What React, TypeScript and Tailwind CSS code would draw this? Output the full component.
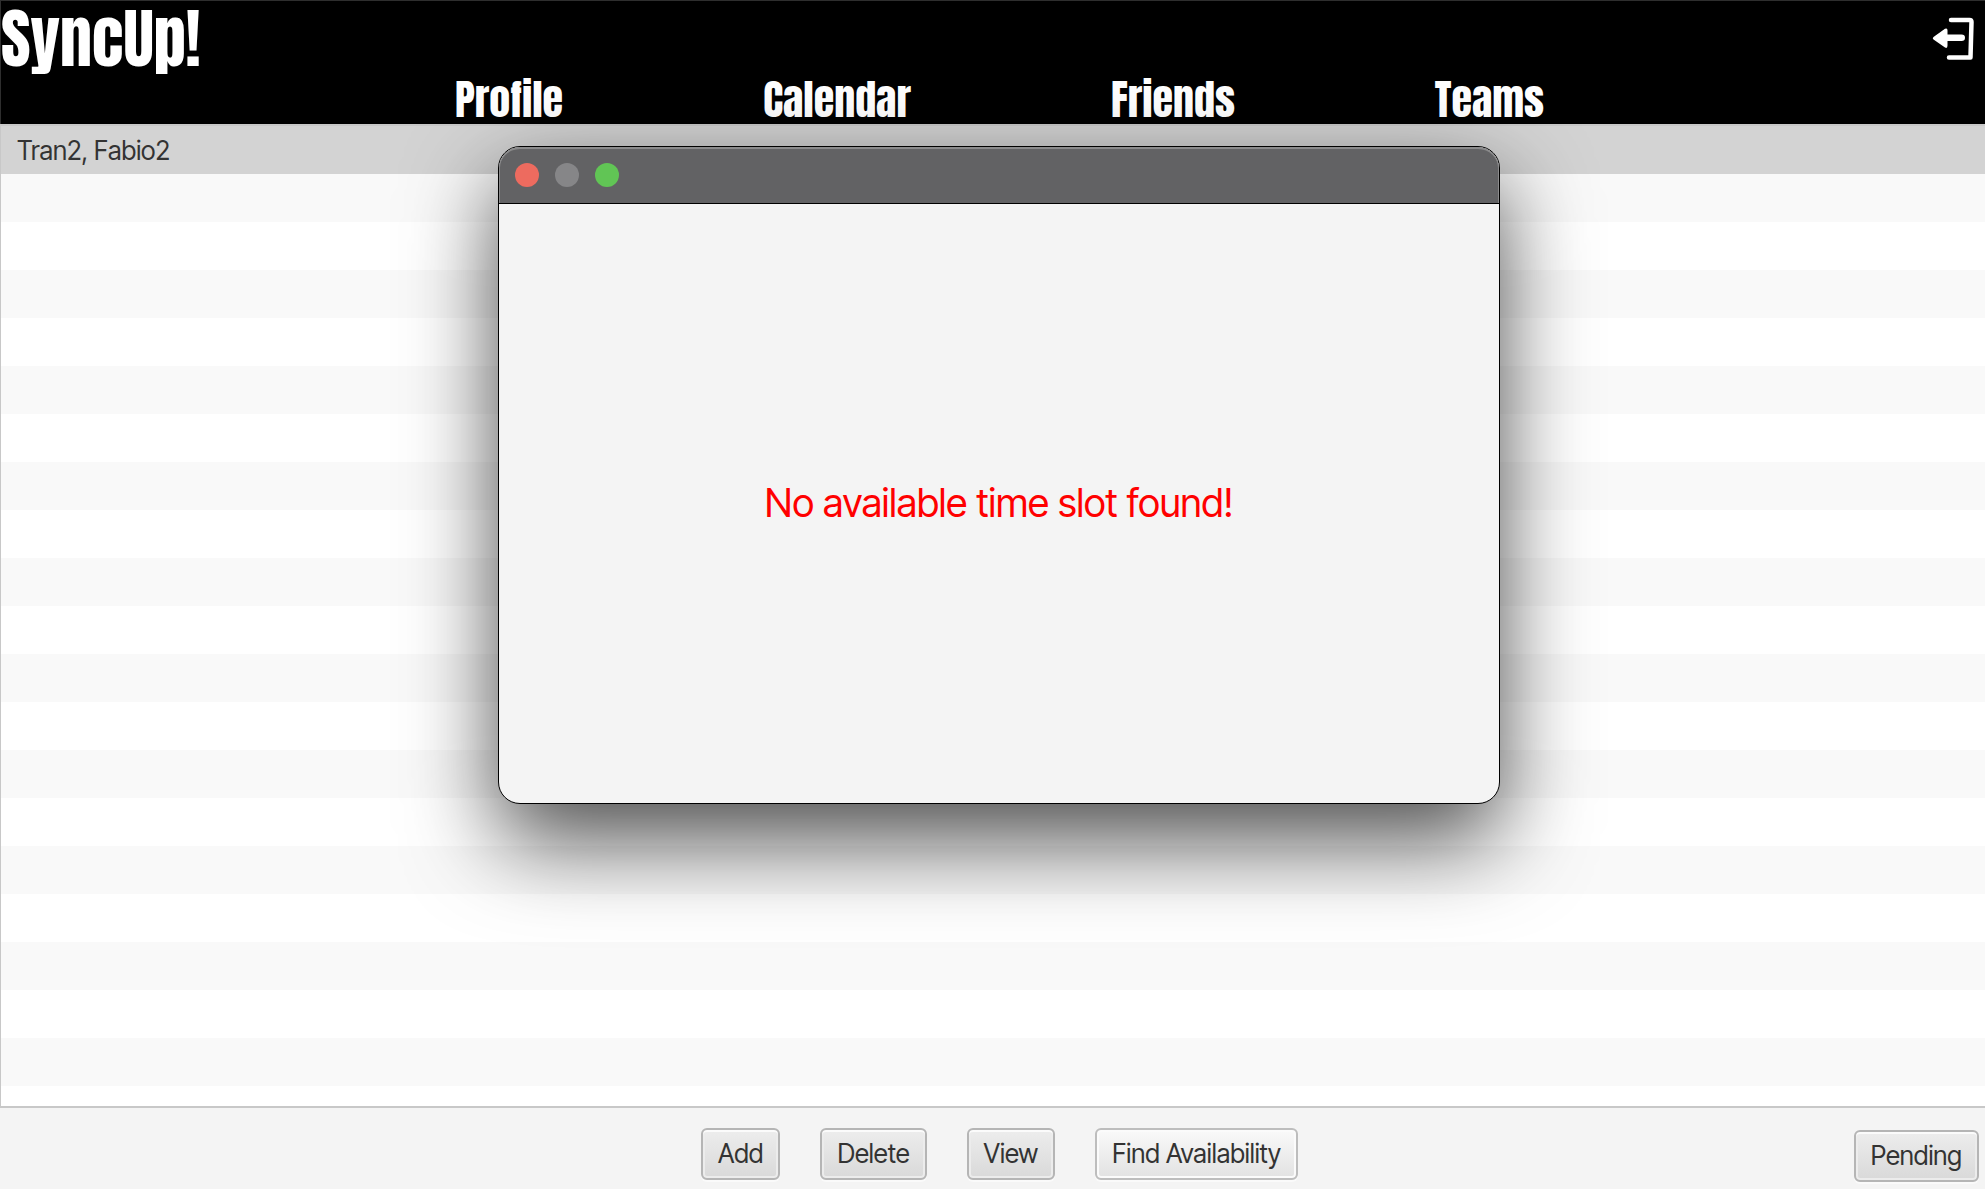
import type { ReactNode } from 'react';

const navItems = ['Profile', 'Calendar', 'Friends', 'Teams'];
const emptyRows = Array.from({ length: 20 }, (_, i) => i);

const heading = "font-['Impact','Anton','Roboto_Condensed','Liberation_Sans',sans-serif] font-normal text-white";

function FxButton({ children, light = false }: { children: ReactNode; light?: boolean }) {
  return (
    <button
      type="button"
      className={
        'h-[52px] rounded-md border-2 px-[15px] text-[26px] leading-8 whitespace-nowrap text-[#333] ' +
        (light
          ? 'border-[#bdbdbd] bg-linear-to-b from-[#fafafa] to-[#e2e2e2] shadow-[inset_0_0_0_2px_#fbfbfb,0_2px_0_#fafafa]'
          : 'border-[#b5b5b5] bg-linear-to-b from-[#ededed] to-[#d9d9d9] shadow-[inset_0_2px_0_#fbfbfb,inset_0_0_0_2px_#ececec,0_2px_0_#fafafa]')
      }
    >
      {children}
    </button>
  );
}

function LogoutIcon() {
  return (
    <svg width="42" height="44" viewBox="0 0 42 44" fill="none" aria-hidden="true">
      <path
        d="M19 3H37.5Q39.500 3 39.500 5L38.500 40M17 40.500H38.500"
        stroke="white"
        strokeWidth="4.500"
        strokeLinecap="round"
        strokeLinejoin="round"
      />
      <path
        d="M1.500 20L13 11.800Q15.500 10.500 15.500 13.500V17.500H29.500Q33 17.500 33 20.700T29.500 24H15.500V28.500Q15.500 32 13 30.500L1.500 22.500Q0 21.200 1.500 20Z"
        fill="white"
      />
    </svg>
  );
}

export default function App() {
  return (
    <div className="relative flex min-h-screen flex-col overflow-hidden bg-[#f4f4f4] font-['Inter_Tight','Inter','Liberation_Sans',sans-serif]">
      <header className="flex h-[124px] flex-col border-t border-l border-[#2e2e2e] bg-black">
        <div className="flex h-[76px] items-center justify-between pr-[11px]">
          <h1 className={heading + ' text-[64px] leading-[76px]'}>SyncUp!</h1>
          <button type="button" aria-label="Log out">
            <LogoutIcon />
          </button>
        </div>
        <nav className="flex justify-center gap-[200px] pl-[13px]">
          {navItems.map((item) => (
            <a key={item} href="#" className={heading + ' text-[42px] leading-[46px]'}>
              {item}
            </a>
          ))}
        </nav>
      </header>

      <main className="h-[984px] overflow-hidden border-y-2 border-l border-[#c8c8c8] bg-white">
        <ul>
          <li className="flex h-12 items-center bg-[#d3d3d3] px-4 text-[26px] text-[#333]">
            Tran2, Fabio2
          </li>
          {emptyRows.map((row) => (
            <li key={row} className="h-12 odd:bg-white even:bg-[#f9f9f9]" />
          ))}
        </ul>
      </main>

      <footer className="grid flex-1 grid-cols-[1fr_auto_1fr] items-start pt-5 pr-[6px] pl-5">
        <div className="col-start-2 flex gap-10">
          <FxButton>Add</FxButton>
          <FxButton>Delete</FxButton>
          <FxButton>View</FxButton>
          <FxButton light>Find Availability</FxButton>
        </div>
        <div className="flex justify-end pt-[2px]">
          <FxButton>Pending</FxButton>
        </div>
      </footer>

      <div className="absolute inset-x-0 top-[146px] flex justify-center pl-[13px]">
        <section
          role="dialog"
          aria-label="Availability"
          className="w-[1002px] overflow-hidden rounded-[22px] border border-black bg-[#f4f4f4] shadow-[0_36px_90px_rgba(0,0,0,0.7)]"
        >
          <div className="flex h-[57px] items-center gap-4 rounded-t-[21px] border-b border-black bg-[#626264] pl-4 shadow-[inset_0_2px_0_#8b8b8c,inset_1px_0_0_#8b8b8c,inset_-1px_0_0_#8b8b8c]">
            <button type="button" aria-label="Close" className="size-6 rounded-full bg-[#ed6b5f]" />
            <button type="button" aria-label="Minimize" className="size-6 rounded-full bg-[#868688]" />
            <button type="button" aria-label="Zoom" className="size-6 rounded-full bg-[#61c555]" />
          </div>
          <p className="flex h-[599px] items-center justify-center text-[39px] text-[#ff0000]">
            No available time slot found!
          </p>
        </section>
      </div>
    </div>
  );
}
